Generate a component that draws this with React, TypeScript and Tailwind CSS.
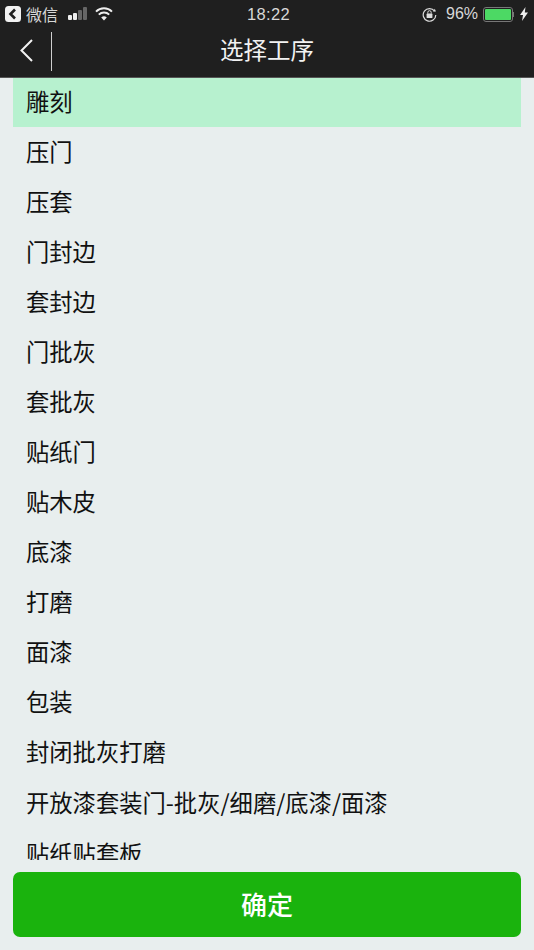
import React from "react";

const cjk = "font-['Noto_Sans_CJK_SC','Noto_Sans',sans-serif]";

const processes = [
  "压门", "压套", "门封边", "套封边", "门批灰", "套批灰", "贴纸门",
  "贴木皮", "底漆", "打磨", "面漆", "包装", "封闭批灰打磨",
];

const StatusBar = () => (
  <div className="flex h-7 items-center justify-between pl-[5px] pr-[6px] text-[16px] text-[#d8d8d8]">
    <div className="flex flex-1 items-center">
      <svg width="16" height="16" viewBox="0 0 16 16" aria-hidden="true">
        <rect width="16" height="16" rx="3.5" fill="#f2f2f2" />
        <path d="M10 3.5 5.5 8l4.5 4.5" fill="none" stroke="#1f1f1f" strokeWidth="2.6" />
      </svg>
      <span className={`ml-[5px] ${cjk}`}>微信</span>
      <svg className="ml-[10px]" width="20" height="14" viewBox="0 0 20 14" aria-hidden="true">
        <rect x="0" y="8" width="4" height="5" rx="1" fill="#eee" />
        <rect x="5" y="6" width="4" height="7" rx="1" fill="#eee" />
        <rect x="10" y="3" width="4" height="10" rx="1" fill="#666" />
        <rect x="15" y="0" width="4" height="13" rx="1" fill="#666" />
      </svg>
      <svg className="ml-[7px]" width="18" height="14" viewBox="0 0 18 14" aria-hidden="true">
        <path d="M1 4.6a11.4 11.4 0 0 1 16 0" fill="none" stroke="#eee" strokeWidth="2" />
        <path d="M3.8 7.6a7.4 7.4 0 0 1 10.4 0" fill="none" stroke="#eee" strokeWidth="2" />
        <path d="M9 13.5 6.2 10.5a4 4 0 0 1 5.6 0z" fill="#eee" />
      </svg>
    </div>
    <span className="ml-[4px] font-['Liberation_Sans',sans-serif] text-[16.5px] tracking-[0.3px]">18:22</span>
    <div className="flex flex-1 items-center justify-end">
      <svg width="15" height="15" viewBox="0 0 15 15" aria-hidden="true">
        <path d="M12.6 4.2A6.3 6.3 0 1 0 13.8 8" fill="none" stroke="#ddd" strokeWidth="1.2" />
        <path d="M11 4.4h3l-1.2-2.6z" fill="#ddd" />
        <rect x="4.6" y="6.6" width="5.8" height="4.4" rx="0.6" fill="#ddd" />
        <path d="M5.8 6.6V5.4a1.7 1.7 0 0 1 3.4 0v1.2" fill="none" stroke="#ddd" />
      </svg>
      <span className="ml-[9px] font-['Liberation_Sans',sans-serif]">96%</span>
      <div className="ml-[5px] flex h-[15px] w-[30px] rounded-[3px] border border-[#777] p-[1px]">
        <div className="w-[26px] rounded-[1px] bg-[#4cd964]" />
      </div>
      <div className="h-[5px] w-[1px] bg-[#777]" />
      <svg className="ml-[6px]" width="8" height="14" viewBox="0 0 8 14" aria-hidden="true">
        <path d="M5.5 0 0 8h3l-1 6 6-8.4H4.8z" fill="#eee" />
      </svg>
    </div>
  </div>
);

const App = () => {
  return (
    <div className={`flex h-[950px] w-[534px] flex-col overflow-hidden bg-[#e8eeee] ${cjk}`}>
      <header className="h-[78px] border-b border-[#555] bg-[#1f1f1f]">
        <StatusBar />
        <div className="relative flex h-[49px] items-center justify-center pb-[5px]">
          <svg className="absolute left-[19px] top-[10px]" width="15" height="24" viewBox="0 0 15 24" aria-hidden="true">
            <path d="M13 2 2.5 12.5 13 23" fill="none" stroke="#f2f2f2" strokeWidth="2" />
          </svg>
          <div className="absolute left-[51px] top-[4px] h-[39px] w-[1px] bg-[#cfcfcf]" />
          <h1 className="text-[23.5px] text-[#f2f2f2]">选择工序</h1>
        </div>
      </header>

      <ul className="h-[782px] overflow-hidden px-[13px] text-[23.3px] text-[#111]">
        <li className="mb-[1px] flex h-[49px] items-center bg-[#b7f1cf] pb-[2px] pl-[13px]">雕刻</li>
        {processes.map((name) => (
          <li key={name} className="flex h-[50px] items-center pb-[4px] pl-[13px]">
            {name}
          </li>
        ))}
        <li className="flex h-[52px] items-center pb-[4px] pl-[13px]">开放漆套装门-批灰/细磨/底漆/面漆</li>
        <li className="flex h-[50px] items-center pb-[4px] pl-[13px]">贴纸贴套板</li>
      </ul>

      <div className="px-[13px] pt-[12px]">
        <button className="h-[65px] w-full rounded-[7px] bg-[#1ab30d] pb-[2px] text-[26px] font-medium text-white">确定</button>
      </div>
    </div>
  );
};

export default App;
